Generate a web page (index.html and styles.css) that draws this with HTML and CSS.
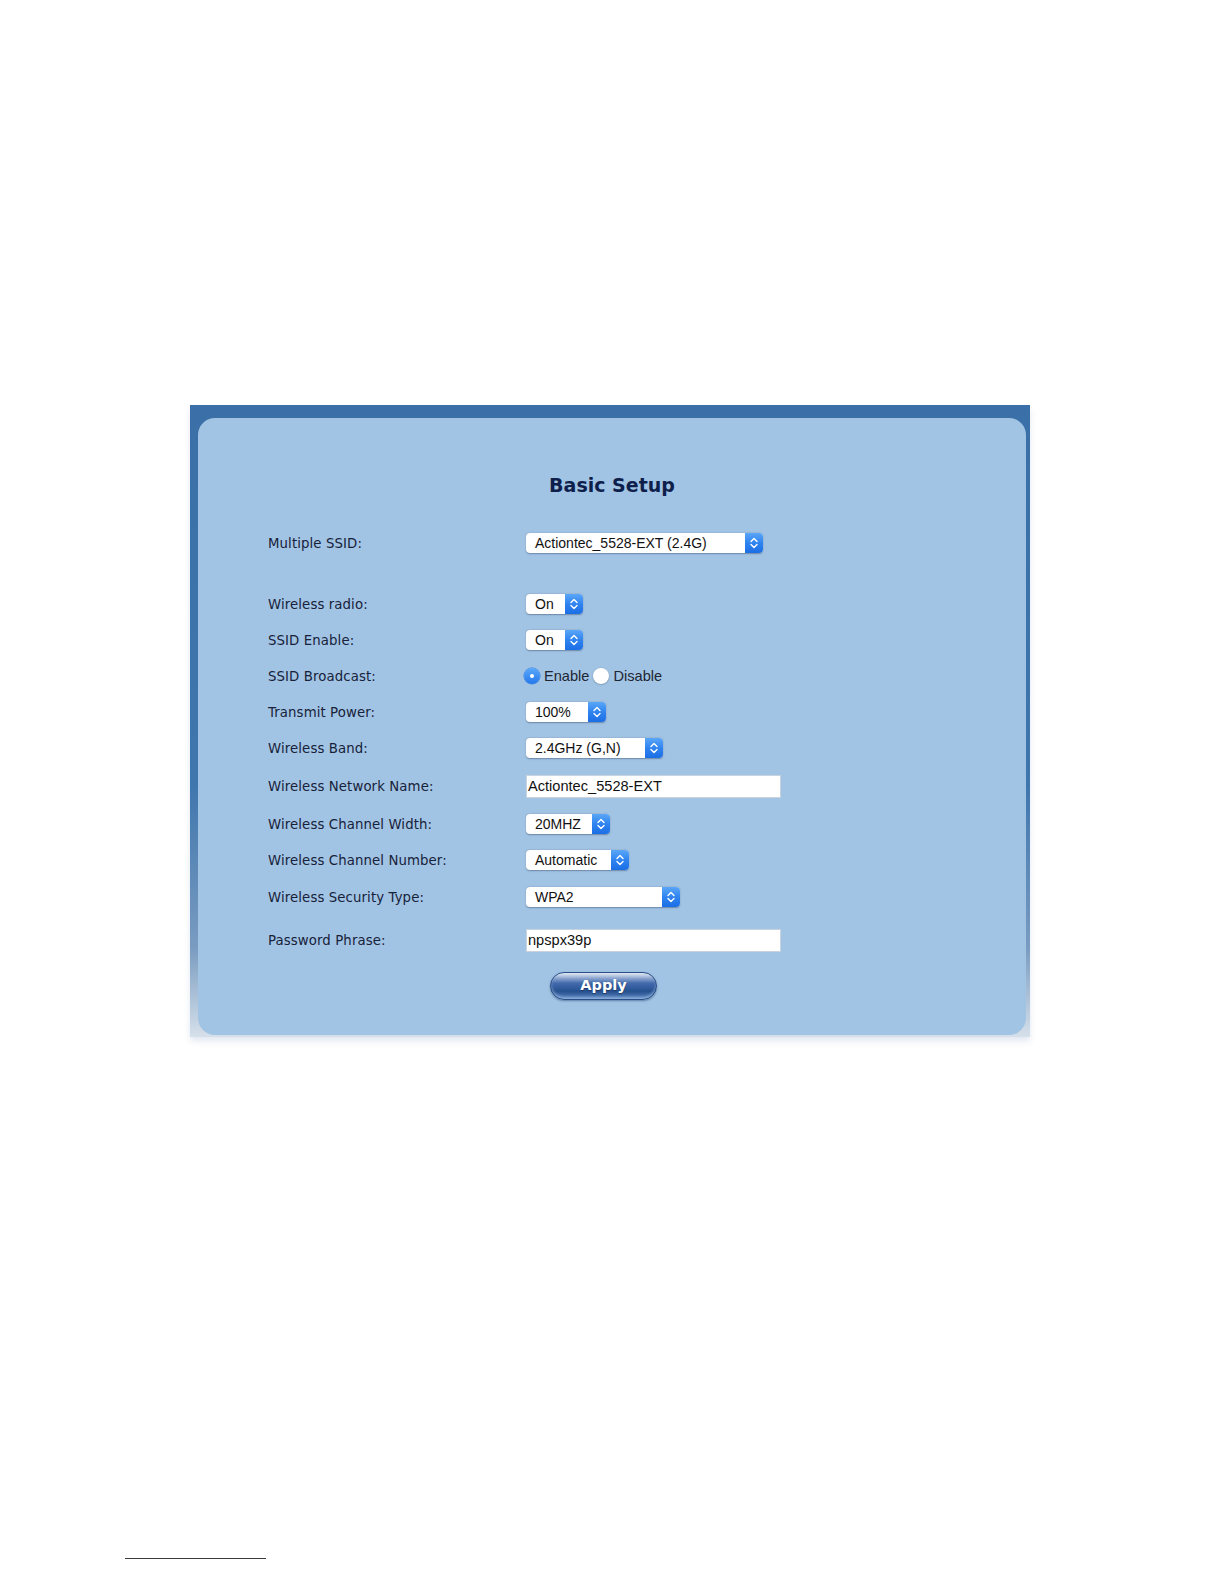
FILE: index.html
```html
<!DOCTYPE html>
<html>
<head>
<meta charset="utf-8">
<title>Basic Setup</title>
<link rel="stylesheet" href="styles.css">
</head>
<body>
<div class="page">
  <div class="frame">
    <div class="panel">
      <h1 class="title">Basic Setup</h1>

      <div class="row r1">
        <div class="label">Multiple SSID:</div>
        <div class="select w-ssid"><span class="val">Actiontec_5528-EXT (2.4G)</span><span class="step"><svg viewBox="0 0 18 20" width="18" height="20"><path d="M6 8.5 L9 5.5 L12 8.5 M6 11.5 L9 14.5 L12 11.5" fill="none" stroke="#fff" stroke-width="1.4" stroke-linecap="round" stroke-linejoin="round"/></svg></span></div>
      </div>

      <div class="row r2">
        <div class="label">Wireless radio:</div>
        <div class="select w-on"><span class="val">On</span><span class="step"><svg viewBox="0 0 18 20" width="18" height="20"><path d="M6 8.5 L9 5.5 L12 8.5 M6 11.5 L9 14.5 L12 11.5" fill="none" stroke="#fff" stroke-width="1.4" stroke-linecap="round" stroke-linejoin="round"/></svg></span></div>
      </div>

      <div class="row">
        <div class="label">SSID Enable:</div>
        <div class="select w-on"><span class="val">On</span><span class="step"><svg viewBox="0 0 18 20" width="18" height="20"><path d="M6 8.5 L9 5.5 L12 8.5 M6 11.5 L9 14.5 L12 11.5" fill="none" stroke="#fff" stroke-width="1.4" stroke-linecap="round" stroke-linejoin="round"/></svg></span></div>
      </div>

      <div class="row">
        <div class="label">SSID Broadcast:</div>
        <div class="radios">
          <span class="radio on"></span><span class="rtext">Enable</span>
          <span class="radio off"></span><span class="rtext">Disable</span>
        </div>
      </div>

      <div class="row">
        <div class="label">Transmit Power:</div>
        <div class="select w-pow"><span class="val">100%</span><span class="step"><svg viewBox="0 0 18 20" width="18" height="20"><path d="M6 8.5 L9 5.5 L12 8.5 M6 11.5 L9 14.5 L12 11.5" fill="none" stroke="#fff" stroke-width="1.4" stroke-linecap="round" stroke-linejoin="round"/></svg></span></div>
      </div>

      <div class="row">
        <div class="label">Wireless Band:</div>
        <div class="select w-band"><span class="val">2.4GHz (G,N)</span><span class="step"><svg viewBox="0 0 18 20" width="18" height="20"><path d="M6 8.5 L9 5.5 L12 8.5 M6 11.5 L9 14.5 L12 11.5" fill="none" stroke="#fff" stroke-width="1.4" stroke-linecap="round" stroke-linejoin="round"/></svg></span></div>
      </div>

      <div class="row r7">
        <div class="label">Wireless Network Name:</div>
        <div class="textbox">Actiontec_5528-EXT</div>
      </div>

      <div class="row r8">
        <div class="label">Wireless Channel Width:</div>
        <div class="select w-width"><span class="val">20MHZ</span><span class="step"><svg viewBox="0 0 18 20" width="18" height="20"><path d="M6 8.5 L9 5.5 L12 8.5 M6 11.5 L9 14.5 L12 11.5" fill="none" stroke="#fff" stroke-width="1.4" stroke-linecap="round" stroke-linejoin="round"/></svg></span></div>
      </div>

      <div class="row">
        <div class="label">Wireless Channel Number:</div>
        <div class="select w-chan"><span class="val">Automatic</span><span class="step"><svg viewBox="0 0 18 20" width="18" height="20"><path d="M6 8.5 L9 5.5 L12 8.5 M6 11.5 L9 14.5 L12 11.5" fill="none" stroke="#fff" stroke-width="1.4" stroke-linecap="round" stroke-linejoin="round"/></svg></span></div>
      </div>

      <div class="row r10">
        <div class="label">Wireless Security Type:</div>
        <div class="select w-sec"><span class="val">WPA2</span><span class="step"><svg viewBox="0 0 18 20" width="18" height="20"><path d="M6 8.5 L9 5.5 L12 8.5 M6 11.5 L9 14.5 L12 11.5" fill="none" stroke="#fff" stroke-width="1.4" stroke-linecap="round" stroke-linejoin="round"/></svg></span></div>
      </div>

      <div class="row r11">
        <div class="label">Password Phrase:</div>
        <div class="textbox">npspx39p</div>
      </div>

      <div class="actions">
        <button class="apply" type="button">Apply</button>
      </div>
    </div>
  </div>
  <div class="footnote-rule"></div>
</div>
</body>
</html>
```

FILE: styles.css
```css
html, body {
  margin: 0;
  padding: 0;
  background: #ffffff;
}

.page {
  padding-top: 405px;
  padding-bottom: 25px;
}

.frame {
  margin-left: 190px;
  width: 840px;
  box-sizing: border-box;
  padding: 13px 4px 2px 8px;
  background: linear-gradient(to bottom, #3a70a7 0%, #3f76ad 60%, #7a9cc1 86%, #d6e0ea 100%);
  box-shadow: 0 4px 6px rgba(190, 205, 225, 0.45);
}

.panel {
  background: #a2c4e4;
  border-radius: 17px;
  padding: 53px 0 35px 70px;
  font-family: "DejaVu Sans", Verdana, sans-serif;
}

.title {
  margin: 0 0 26px -70px;
  text-align: center;
  font-size: 19px;
  line-height: 28px;
  font-weight: bold;
  color: #0e1f4c;
}

.row {
  display: flex;
  align-items: center;
  height: 36px;
}

.r2 { margin-top: 25px; }
.r7 { margin-top: 2px; }
.r8 { margin-top: 2px; }
.r10 { margin-top: 1px; }
.r11 { margin-top: 7px; }

.label {
  width: 258px;
  flex: none;
  font-size: 13.3px;
  color: #17223a;
  letter-spacing: 0.1px;
}

.select {
  display: flex;
  height: 20px;
  box-sizing: border-box;
  background: #ffffff;
  border-radius: 4px;
  box-shadow: 0 0.5px 1.5px rgba(40, 60, 90, 0.45);
  font-family: "Liberation Sans", Arial, sans-serif;
  font-size: 14px;
  color: #111;
  overflow: hidden;
}

.select .val {
  flex: 1;
  padding-left: 9px;
  line-height: 20px;
  white-space: nowrap;
}

.select .step {
  width: 18px;
  flex: none;
  height: 20px;
  background: linear-gradient(to bottom, #5aa6f8 0%, #2f84f0 50%, #1c6ee4 100%);
  display: block;
}

.select .step svg {
  display: block;
}

.w-ssid { width: 237px; }
.w-on { width: 57px; }
.w-pow { width: 80px; }
.w-band { width: 137px; }
.w-width { width: 84px; }
.w-chan { width: 103px; }
.w-sec { width: 154px; }

.textbox {
  width: 255px;
  height: 23px;
  box-sizing: border-box;
  background: #ffffff;
  border: 1px solid #c9d3dd;
  padding-left: 1px;
  font-family: "Liberation Sans", Arial, sans-serif;
  font-size: 14.6px;
  line-height: 21px;
  color: #111;
}

.radios {
  display: flex;
  align-items: center;
  margin-left: -2px;
  font-family: "Liberation Sans", Arial, sans-serif;
  font-size: 14.6px;
  color: #1e2633;
}

.radio {
  width: 16px;
  height: 16px;
  border-radius: 50%;
  box-sizing: border-box;
  display: inline-block;
  position: relative;
  flex: none;
}

.radio.on {
  background: linear-gradient(to bottom, #5aa8f9, #2478ec);
  box-shadow: 0 0 0 0.5px #2d77d8;
}

.radio.on::after {
  content: "";
  position: absolute;
  left: 6px;
  top: 6px;
  width: 4px;
  height: 4px;
  border-radius: 50%;
  background: #fff;
}

.radio.off {
  background: #ffffff;
  box-shadow: 0 0.5px 1.5px rgba(40, 60, 90, 0.5);
  margin-left: 4px;
}

.rtext {
  margin-left: 4px;
}

.actions {
  margin-top: 14px;
  padding-left: 282px;
  display: flex;
}

.apply {
  width: 107px;
  height: 28px;
  border-radius: 14px;
  border: 1.5px solid #2a4f88;
  background:
    linear-gradient(to bottom, rgba(255,255,255,0.8) 0%, rgba(255,255,255,0.3) 20%, rgba(255,255,255,0) 38%),
    linear-gradient(to bottom, #7193c7 0%, #3d65a8 45%, #26518f 70%, #5680bb 100%);
  box-shadow: inset 0 -2px 3px rgba(170, 198, 235, 0.65), 0 1px 2px rgba(30, 60, 110, 0.5);
  color: #ffffff;
  font-family: "DejaVu Sans", Verdana, sans-serif;
  font-weight: bold;
  font-size: 14.5px;
  padding: 0 0 2px 0;
  text-shadow: 0 1px 1px rgba(20, 40, 80, 0.7);
  cursor: pointer;
}

.footnote-rule {
  margin-top: 521px;
  margin-left: 125px;
  width: 141px;
  height: 1px;
  background: #3a3a3a;
}
```
